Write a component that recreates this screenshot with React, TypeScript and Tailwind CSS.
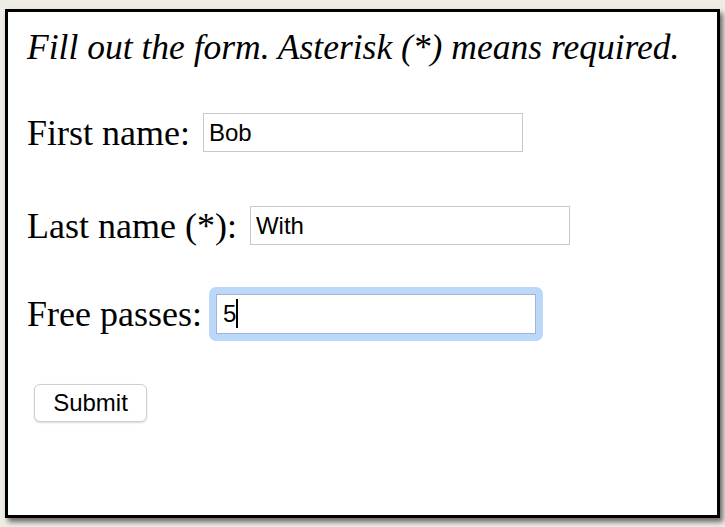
import React from "react";

export default function App() {
  const serif = { fontFamily: '"Liberation Serif", "Times New Roman", serif' };
  const sans = { fontFamily: '"Liberation Sans", Arial, sans-serif' };
  return (
    <div className="w-[725px] h-[527px] bg-[#efece6] pt-[9px] pl-[5px] overflow-hidden">
      <div className="w-[715px] h-[509px] border-[3px] border-black bg-white shadow-[3px_4px_5px_rgba(0,0,0,0.55)] pl-[19px] text-black" style={serif}>
        <div className="h-[72px] flex items-center">
          <p className="italic text-[35.5px] leading-none whitespace-nowrap">Fill out the form. Asterisk (*) means required.</p>
        </div>
        <div className="h-[97px] flex items-center gap-[13px]">
          <label className="text-[36px] leading-none">First name:</label>
          <input
            readOnly
            value="Bob"
            className="w-[320px] h-[39px] border border-[#c9c9c9] px-[5px] text-[24px] text-black outline-none"
            style={sans}
          />
        </div>
        <div className="h-[89px] flex items-center gap-[13px]">
          <label className="text-[36px] leading-none">Last name (*):</label>
          <input
            readOnly
            value="With"
            className="w-[320px] h-[39px] border border-[#c9c9c9] px-[5px] text-[24px] text-black outline-none"
            style={sans}
          />
        </div>
        <div className="h-[88px] flex items-center gap-[7px]">
          <label className="text-[36px] leading-none">Free passes:</label>
          <div className="p-[7px] bg-[#bcd8f8] rounded-[7px]">
            <div className="relative">
              <input
                readOnly
                value="5"
                className="block w-[320px] h-[40px] border border-[#9fb6cf] bg-white px-[6px] text-[24px] text-black outline-none"
                style={sans}
              />
              <span className="absolute left-[20px] top-[5px] w-[2px] h-[29px] bg-black" />
            </div>
          </div>
        </div>
        <div className="h-[90px] flex items-center pl-[7px]">
          <button
            className="w-[113px] h-[38px] rounded-[6px] border border-[#cfcfcf] bg-white shadow-[0_1px_2px_rgba(0,0,0,0.15)] text-[24px] text-black"
            style={sans}
          >
            Submit
          </button>
        </div>
      </div>
    </div>
  );
}
